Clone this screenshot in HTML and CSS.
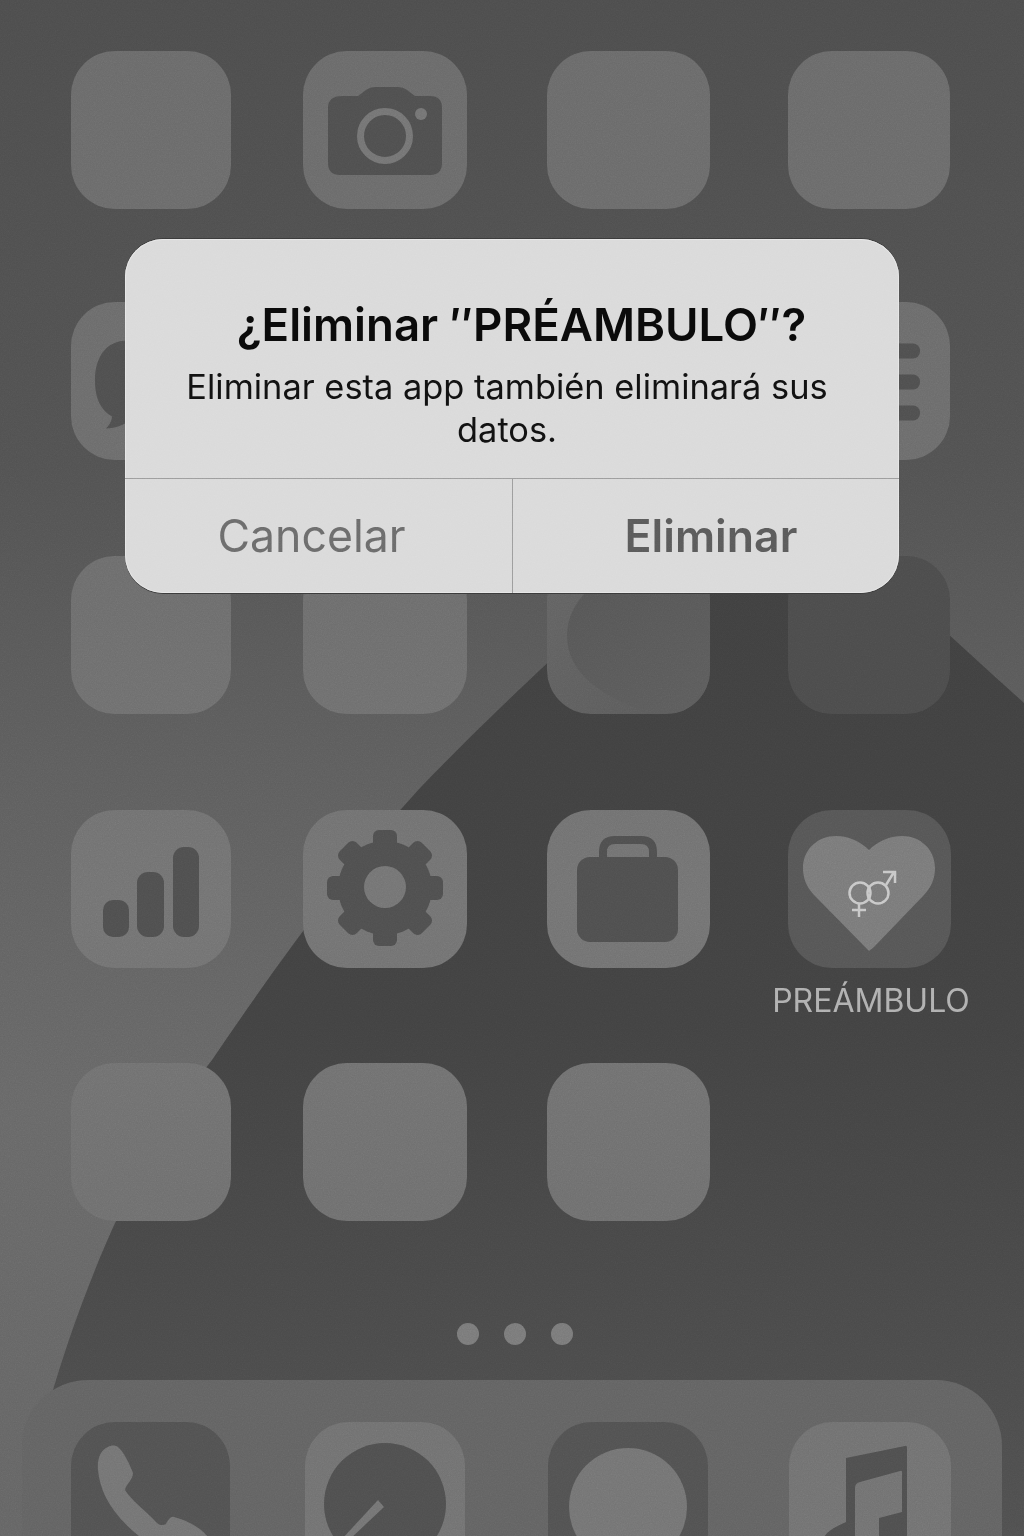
FILE: index.html
```html
<!DOCTYPE html>
<html lang="es">
<head>
<meta charset="utf-8">
<title>Eliminar app</title>
<link rel="stylesheet" href="styles.css">
</head>
<body>
<main class="screen">
  <svg class="wallpaper" viewBox="0 0 1024 1536" aria-hidden="true">
    <defs>
      <linearGradient id="base" x1="0" y1="0" x2="0" y2="1">
        <stop offset="0" stop-color="#4d4d4d"/>
        <stop offset="0.3" stop-color="#525252"/>
        <stop offset="0.5" stop-color="#5e5e5e"/>
        <stop offset="0.72" stop-color="#686868"/>
        <stop offset="1" stop-color="#656565"/>
      </linearGradient>
      <linearGradient id="hill" x1="0" y1="0" x2="0" y2="1">
        <stop offset="0" stop-color="#404040"/>
        <stop offset="0.5" stop-color="#424242"/>
        <stop offset="1" stop-color="#505050"/>
      </linearGradient>
      <linearGradient id="blobfade" x1="0" y1="0" x2="0.6" y2="1">
        <stop offset="0" stop-color="#555"/>
        <stop offset="1" stop-color="#5c5c5c"/>
      </linearGradient>
      <filter id="noise" x="0" y="0" width="100%" height="100%">
        <feTurbulence type="fractalNoise" baseFrequency="0.85" numOctaves="2" seed="4"/>
        <feColorMatrix type="saturate" values="0"/>
      </filter>
    </defs>
    <rect width="1024" height="1536" fill="url(#base)"/>
    <path fill="url(#hill)" d="M50 1400C85 1280 140 1150 212 1060C280 960 345 870 420 788C480 725 600 610 700 530C740 500 790 490 840 535C900 590 960 645 1024 703V1536H50Z"/>
  </svg>

  <section class="grid">
    <div class="app light"></div>
    <div class="app light">
      <svg class="glyph" viewBox="303 51 164 158"><path class="ink" d="M342 96H358L366 90Q370 87 375 87H398Q403 87 407 90L415 96H430Q442 96 442 108V163Q442 175 430 175H340Q328 175 328 163V108Q328 96 342 96Z"/><circle class="ring" cx="385" cy="136" r="24.500"/><circle class="pale" cx="421" cy="114" r="6"/></svg>
    </div>
    <div class="app light"></div>
    <div class="app light"></div>

    <div class="app light">
      <svg class="glyph" viewBox="71 302 160 157"><path class="ink" d="M128 340C105 340 95 358 95 380C95 400 102 410 112 416C112 420 109 425 106 428C116 428 124 424 130 420H170V340Z"/></svg>
    </div>
    <div class="app light"></div>
    <div class="app light"></div>
    <div class="app light">
      <svg class="glyph" viewBox="788 302 162 157"><rect class="ink" x="860" y="343" width="60" height="15" rx="7"/><rect class="ink" x="860" y="374" width="60" height="15" rx="7"/><rect class="ink" x="860" y="405" width="60" height="15" rx="7"/></svg>
    </div>

    <div class="app light"></div>
    <div class="app light"></div>
    <div class="app mid">
      <svg class="glyph" viewBox="547 556 163 157"><path fill="url(#blobfade)" d="M640 570H710V713H650C615 700 567 680 567 635C567 600 600 570 640 570Z"/></svg>
    </div>
    <div class="app deep"></div>

    <div class="app light">
      <svg class="glyph" viewBox="71 810 160 158"><rect class="ink" x="103" y="900" width="26" height="37" rx="10"/><rect class="ink" x="137" y="872" width="27" height="65" rx="11"/><rect class="ink" x="173" y="847" width="26" height="90" rx="11"/></svg>
    </div>
    <div class="app light">
      <svg class="glyph" viewBox="303 810 164 158">
        <g class="ink">
          <circle cx="385" cy="888" r="47"/>
          <rect x="373" y="830" width="24" height="116" rx="6"/>
          <rect x="373" y="830" width="24" height="116" rx="6" transform="rotate(45 385 888)"/>
          <rect x="373" y="830" width="24" height="116" rx="6" transform="rotate(90 385 888)"/>
          <rect x="373" y="830" width="24" height="116" rx="6" transform="rotate(135 385 888)"/>
        </g>
        <circle class="paper" cx="385" cy="887" r="21"/>
      </svg>
    </div>
    <div class="app light">
      <svg class="glyph" viewBox="547 810 163 158"><path class="handle" d="M603 860V852Q603 840 615 840H641Q653 840 653 852V860"/><rect class="ink" x="577" y="857" width="101" height="85" rx="13"/></svg>
    </div>
    <div class="app featured">
      <svg class="tile" viewBox="787 810 163 158">
        <path class="heart" d="M868 951L813 895C805 886 802 878 802 868C802 849 817 836 835 836C848 836 860 842 868 850C876 842 888 836 901 836C919 836 934 849 934 868C934 878 931 886 923 895L873 947Q868 951 868 951Z"/>
        <g class="sex">
          <circle cx="859" cy="893" r="10.500"/>
          <circle cx="877" cy="893" r="10.500"/>
          <path d="M858 904V917M851 910H865M885 885L893 872M882 872H894V883"/>
        </g>
      </svg>
      <span class="app-name">PREÁMBULO</span>
    </div>

    <div class="app light"></div>
    <div class="app light"></div>
    <div class="app light"></div>
  </section>

  <div class="dots"><span class="dot"></span><span class="dot"></span><span class="dot"></span></div>

  <section class="dock">
    <div class="app ink-tile">
      <svg class="glyph" viewBox="71 1422 159 158"><path class="paper" d="M108 1447C100 1450 97 1460 98 1470C100 1492 112 1516 144 1540H210C204 1530 190 1521 174 1517C171 1516 168 1520 166 1524C163 1526 159 1525 157 1523C145 1510 131 1500 125 1490C126 1484 133 1480 133 1473C130 1465 124 1452 118 1447C115 1445 111 1445 108 1447Z"/></svg>
    </div>
    <div class="app light">
      <svg class="glyph" viewBox="305 1422 160 158"><circle class="ink" cx="385" cy="1504" r="61"/><path class="paper" d="M378 1500L384 1507L349 1540H341Z"/></svg>
    </div>
    <div class="app ink-tile">
      <svg class="glyph" viewBox="548 1422 160 158"><ellipse class="paper" cx="628" cy="1507" rx="59" ry="59"/></svg>
    </div>
    <div class="app light">
      <svg class="glyph" viewBox="789 1422 162 158"><path class="ink" d="M846 1458L905 1446Q907 1445 907 1448V1540H879V1518L902 1512V1472Q902 1470 900 1471L860 1482Q855 1483 855 1488V1540H823C825 1532 835 1527 846 1522Z"/></svg>
    </div>
  </section>

  <div class="alert" role="alertdialog">
    <div class="alert-body">
      <h1 class="alert-title">¿Eliminar ″PRÉAMBULO″?</h1>
      <p class="alert-text">Eliminar esta app también eliminará sus datos.</p>
    </div>
    <div class="alert-actions">
      <div class="action action-soft">Cancelar</div>
      <div class="action action-strong">Eliminar</div>
    </div>
  </div>

  <svg class="grain" viewBox="0 0 1024 1536" aria-hidden="true"><rect width="1024" height="1536" filter="url(#noise)"/></svg>
</main>
</body>
</html>
```

FILE: styles.css
```css
* { box-sizing: border-box; }
html, body { margin: 0; padding: 0; }
body { background: #555; font-family: Inter, "Liberation Sans", sans-serif; }

.screen {
  position: relative;
  width: 1024px;
  height: 1536px;
  overflow: hidden;
  padding-top: 51px;
}
.wallpaper { position: absolute; inset: 0; width: 1024px; height: 1536px; display: block; }
.grain {
  position: absolute;
  inset: 0;
  width: 1024px;
  height: 1536px;
  opacity: 0.16;
  mix-blend-mode: overlay;
  pointer-events: none;
}

.grid {
  position: relative;
  display: grid;
  margin-left: 71px;
  grid-template-columns: 232px 244px 241px 162px;
  grid-template-rows: 251px 254px 254px 253px 158px;
}
.grid > .app:nth-child(4n+1) { width: 160px; }
.grid > .app:nth-child(4n+2) { width: 164px; }
.grid > .app:nth-child(4n+3) { width: 163px; }
.grid > .app:nth-child(4n+4) { width: 162px; }

.app {
  position: relative;
  height: 158px;
  border-radius: 44px;
}
.light { background: linear-gradient(#6a6a6a 0, #6d6d6d 600px, #737373 900px, #6f6f6f 1200px, #727272 1536px) fixed; }
.mid { background: linear-gradient(135deg, #646464, #5a5a5a); }
.deep { background: #4c4c4c; }
.ink-tile { background: #525252; }
.featured {
  display: flex;
  flex-direction: column;
  align-items: center;
  background: none;
}
.glyph { display: block; width: 100%; height: 100%; border-radius: 44px; }
.tile { display: block; flex: none; width: 163px; height: 158px; background: #565656; border-radius: 44px; }
.app-name {
  flex: none;
  margin: 15px 0 0 4px;
  font-size: 32px;
  line-height: 36px;
  color: #b0b0b0;
  white-space: nowrap;
}

.ink { fill: #4f4f4f; }
.paper { fill: #747474; }
.pale { fill: #747474; }
.ring { fill: none; stroke: #747474; stroke-width: 7; }
.handle { fill: none; stroke: #4f4f4f; stroke-width: 8; }
.heart { fill: #7a7a7a; }
.sex { fill: none; stroke: #c8c8c8; stroke-width: 2.500; }

.dots {
  position: relative;
  display: flex;
  justify-content: center;
  gap: 25px;
  margin: 102px 0 35px 6px;
}
.dot { width: 22px; height: 22px; border-radius: 50%; background: #7a7a7a; }

.dock {
  position: relative;
  display: grid;
  grid-template-columns: 234px 243px 241px 162px;
  width: 980px;
  height: 240px;
  margin-left: 22px;
  padding: 42px 0 0 49px;
  background: #636363;
  border-radius: 66px;
}
.dock > .app:nth-child(1) { width: 159px; }
.dock > .app:nth-child(2) { width: 160px; }
.dock > .app:nth-child(3) { width: 160px; }
.dock > .app:nth-child(4) { width: 162px; }

.alert {
  position: absolute;
  left: 125px;
  top: 239px;
  display: flex;
  flex-direction: column;
  width: 774px;
  height: 354px;
  background: #dadada;
  border-radius: 38px;
  box-shadow: 0 -1px 0 #3a3a3a, 0 1px 0 #3a3a3a, inset 0 0 0 1px #e6e6e6;
}
.alert-body {
  flex: none;
  height: 240px;
  padding: 56px 60px 0;
  text-align: center;
  border-bottom: 1px solid #9c9c9c;
}
.alert-title {
  margin: 0 0 10px;
  padding-left: 19px;
  font-size: 45.600px;
  line-height: 60px;
  font-weight: 600;
  color: #0a0a0a;
  white-space: nowrap;
}
.alert-text {
  margin: 0;
  padding-right: 10px;
  font-size: 34.400px;
  line-height: 43px;
  font-weight: 400;
  color: #111;
}
.alert-actions { display: flex; flex: 1; }
.action {
  display: flex;
  align-items: center;
  justify-content: center;
  flex: 0 0 387px;
  font-size: 44.600px;
  color: #6b6b6b;
}
.action-soft { padding-right: 14px; }
.action-strong {
  padding-left: 10px;
  border-left: 1px solid #9c9c9c;
  font-weight: 600;
  color: #5a5a5a;
}
```
